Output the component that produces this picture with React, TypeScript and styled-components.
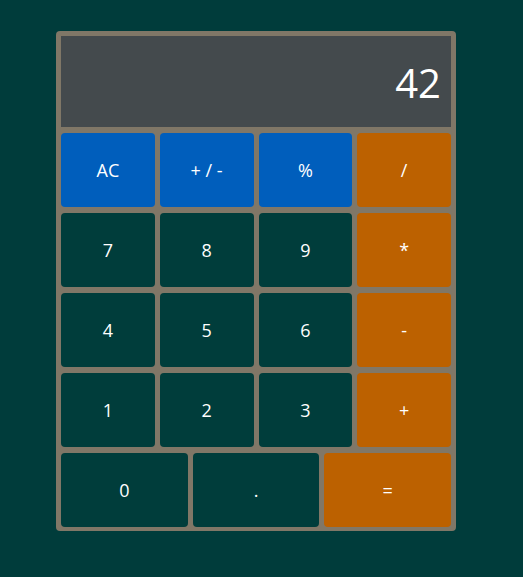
import React from "react";
import styled, { createGlobalStyle } from "styled-components";

const Global = createGlobalStyle`
  html, body { margin: 0; padding: 0; background: #003c3b; }
  body { font-family: "Open Sans", "Noto Sans", sans-serif; }
`;

const Page = styled.div`
  width: 523px;
  height: 577px;
  padding-top: 31px;
  padding-left: 56px;
  box-sizing: border-box;
`;

const Calculator = styled.div`
  width: 400px;
  height: 500px;
  box-sizing: border-box;
  background: #807767;
  border-radius: 4px;
  padding: 5px 5px 4px 5px;
  display: flex;
  flex-direction: column;
  gap: 6px;
`;

const Display = styled.div`
  height: 91px;
  background: #444a4d;
  color: #ffffff;
  font-size: 40px;
  display: flex;
  align-items: center;
  justify-content: flex-end;
  padding-right: 10px;
  padding-top: 2px;
  box-sizing: border-box;
`;

const Row = styled.div<{ $cols: number }>`
  height: 74px;
  display: grid;
  grid-template-columns: repeat(${(p) => p.$cols}, 1fr);
  column-gap: 5px;
`;

type Variant = "num" | "fn" | "op";
const colors: Record<Variant, string> = {
  num: "#003d3b",
  fn: "#005ebc",
  op: "#bc6100",
};

const Key = styled.button<{ $variant: Variant }>`
  border: none;
  margin: 0;
  padding: 0;
  border-radius: 4px;
  background: ${(p) => colors[p.$variant]};
  color: #ffffff;
  font-family: "Open Sans", "Noto Sans", sans-serif;
  font-size: 18px;
  display: flex;
  align-items: center;
  justify-content: center;
`;

const rows: [string, Variant][][] = [
  [["AC", "fn"], ["+ / -", "fn"], ["%", "fn"], ["/", "op"]],
  [["7", "num"], ["8", "num"], ["9", "num"], ["*", "op"]],
  [["4", "num"], ["5", "num"], ["6", "num"], ["-", "op"]],
  [["1", "num"], ["2", "num"], ["3", "num"], ["+", "op"]],
  [["0", "num"], [".", "num"], ["=", "op"]],
];

export default function App() {
  return (
    <>
      <Global />
      <Page>
        <Calculator>
          <Display>42</Display>
          {rows.map((r, i) => (
            <Row key={i} $cols={r.length}>
              {r.map(([label, v]) => (
                <Key key={label} $variant={v}>
                  {label}
                </Key>
              ))}
            </Row>
          ))}
        </Calculator>
      </Page>
    </>
  );
}
